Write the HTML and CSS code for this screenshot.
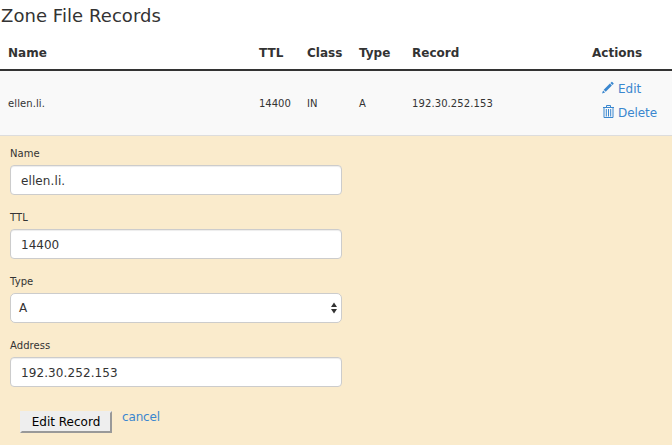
FILE: index.html
```
<!DOCTYPE html>
<html lang="en">
<head>
<meta charset="utf-8">
<title>Zone File Records</title>
<link rel="stylesheet" href="styles.css">
</head>
<body>
<h1 class="title">Zone File Records</h1>
<div class="row head">
  <span>Name</span><span>TTL</span><span>Class</span><span>Type</span><span>Record</span><span>Actions</span>
</div>
<div class="row record">
  <span class="host">ellen.li.</span><span>14400</span><span>IN</span><span>A</span><span class="ip">192.30.252.153</span>
  <div class="actions">
    <a class="action" href="#"><svg class="icon" viewBox="0 0 12 13"><path d="M0 12.5 1.1 9.4 3.1 11.4ZM1.7 8.8 7.9 2.6 9.9 4.6 3.7 10.8ZM8.4 2.1 9.5 1Q9.9.6 10.3 1L11.5 2.2Q11.9 2.6 11.5 3L10.4 4.1Z"/></svg><span>Edit</span></a>
    <a class="action" href="#"><svg class="icon line" viewBox="0 0 12 13"><path d="M1 2.5H12M4.5 2.5V.5H8.5V2.5M2 3V12.5H11V3M4.3 4V11.5M6.5 4V11.5M8.7 4V11.5"/></svg><span class="t-delete">Delete</span></a>
  </div>
</div>
<form class="form">
  <label class="label" for="name">Name</label>
  <input class="field host" id="name" value="ellen.li.">
  <label class="label" for="ttl">TTL</label>
  <input class="field" id="ttl" value="14400">
  <label class="label" for="type">Type</label>
  <div class="field select" id="type"><span>A</span><svg class="arrows" viewBox="0 0 6 12"><path d="M0 5 3 .6 6 5ZM0 7 3 11.4 6 7Z"/></svg></div>
  <label class="label" for="address">Address</label>
  <input class="field ip" id="address" value="192.30.252.153">
  <div class="buttons"><button class="submit" type="button">Edit Record</button><a class="cancel" href="#">cancel</a></div>
</form>
</body>
</html>
```
FILE: styles.css
```
* { box-sizing: border-box; }
body { margin: 0; background: #fff; color: #333; font: 12px/18px Verdana, "DejaVu Sans", sans-serif; height: 445px; overflow: hidden; display: flex; flex-direction: column; }
a { color: #3a87cf; text-decoration: none; }
.title { margin: 0; height: 35px; padding-left: 1px; font-size: 18px; line-height: 31px; font-weight: 400; letter-spacing: .06px; white-space: nowrap; }
.row { display: grid; grid-template-columns: 251px 48px 52px 53px 180px 80px; padding-left: 8px; align-items: center; flex: none; white-space: nowrap; }
.head { height: 36px; padding-top: 2px; border-bottom: 2px solid #333; font-weight: 700; }
.record { height: 65px; padding-top: 2px; background: #f9f9f9; border-bottom: 1px solid #ddd; font-size: 10px; }
.host, .ip { letter-spacing: .1px; }
.actions { display: flex; flex-direction: column; margin-top: -6px; padding-left: 10px; font-size: 12px; }
.action { display: flex; align-items: center; gap: 4px; height: 24px; }
.icon { width: 12px; height: 13px; margin-bottom: 3px; fill: #3a87cf; }
.icon.line { fill: none; stroke: #3a87cf; stroke-width: 1; }
.t-delete { letter-spacing: -.08px; }
.form { flex: 1; background: #faebcc; padding: 9px 10px 0; }
.label { display: block; height: 20px; font-size: 10px; line-height: 18px; letter-spacing: .08px; }
.field { display: block; width: 332px; height: 30px; margin: 0 0 14px; padding: 1px 10px 0; border: 1px solid #ccc; border-radius: 4px; background: #fff; color: #333; font: inherit; box-shadow: inset 0 1px 1px rgba(0,0,0,.075); }
.select { display: flex; align-items: center; justify-content: space-between; padding: 0 4px 0 8px; border-radius: 5px; box-shadow: none; }
.arrows { width: 6px; height: 12px; fill: #333; }
.buttons { display: flex; align-items: flex-start; gap: 10px; padding: 10px 0 0 10px; }
.submit { width: 92px; height: 22px; padding: 0; border: 2px solid; border-color: #eee #999 #999 #eee; background: #eee; color: #000; font: inherit; white-space: nowrap; }
.cancel { line-height: 12px; letter-spacing: -.15px; }
```
